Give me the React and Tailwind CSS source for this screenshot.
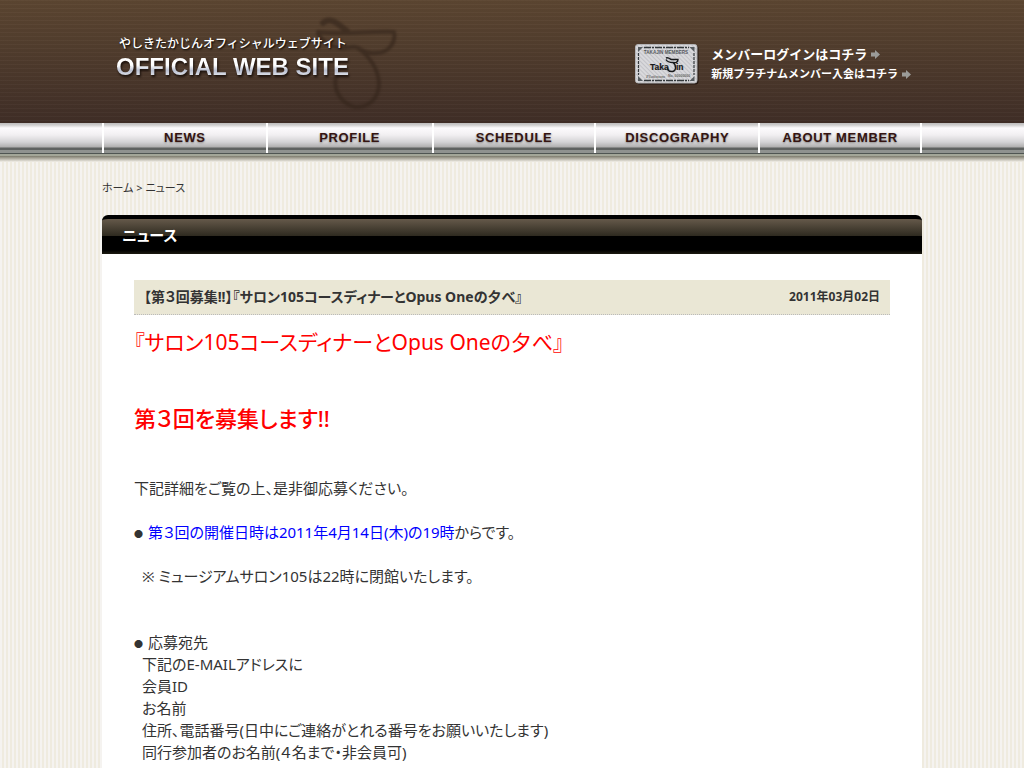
import React from 'react';

const menuItems = [
  { label: 'NEWS', href: '#news', width: 'w-[164px]' },
  { label: 'PROFILE', href: '#profile', width: 'w-[166px]' },
  { label: 'SCHEDULE', href: '#schedule', width: 'w-[163px]' },
  { label: 'DISCOGRAPHY', href: '#discography', width: 'w-[164px]' },
  { label: 'ABOUT MEMBER', href: '#member', width: 'w-[162px]' },
];

const entryLines = [
  '下記のE-MAILアドレスに',
  '会員ID',
  'お名前',
  '住所、電話番号(日中にご連絡がとれる番号をお願いいたします)',
  '同行参加者のお名前(４名まで・非会員可)',
];

const HatMark = ({ className }) => (
  <svg className={className} viewBox="0 0 90 100" fill="none" stroke="currentColor" strokeLinecap="round" strokeLinejoin="round" aria-hidden="true">
    <path d="M13 8C17 4 23 5 28 9L37 16" strokeWidth="6" />
    <path d="M8 17C30 20 60 16 84 17C86 26 80 38 66 38C58 39 53 36 48 33" strokeWidth="4" />
    <path d="M8 19C14 28 22 32 31 33C38 34 42 30 48 33C60 42 68 54 69 68C69 84 58 93 45 92C32 89 23 76 26 62" strokeWidth="4" />
  </svg>
);

const Arrow = () => (
  <svg className="w-[9px] h-[9px] shrink-0" viewBox="0 0 9 9" fill="#9b9b98" aria-hidden="true">
    <path d="M0 2.5H4V0L9 4.5L4 9V6.5H0Z" />
  </svg>
);

const MemberCard = () => (
  <svg className="w-[64px] h-[41px] shrink-0" viewBox="0 0 64 41" role="img" aria-label="Takajin Members">
    <defs>
      <pattern id="hatch" width="3" height="3" patternUnits="userSpaceOnUse" patternTransform="rotate(-45)">
        <rect width="3" height="3" fill="#d9d9dc" />
        <rect width="1" height="3" fill="#c3c3c8" />
      </pattern>
    </defs>
    <rect x="1.5" y="1.5" width="62" height="39" rx="3" fill="#241812" />
    <rect x="0.5" y="0.5" width="61.5" height="38.5" rx="2.5" fill="url(#hatch)" stroke="#b4b4b6" />
    <path d="M9 3.500H54M9 36.500H54" fill="none" stroke="#33383b" strokeWidth="1.4" strokeDasharray="7 1 2 1" />
    <path d="M3.500 9V31M59 9V31" fill="none" stroke="#33383b" strokeWidth="1.2" strokeDasharray="3 1" />
    <g fill="#565c60">
      <path d="M3 3h5l-5 5zM59.500 3h-5l5 5zM3 37h5l-5-5zM59.500 37h-5l5-5z" />
    </g>
    <text x="31" y="9.500" textAnchor="middle" fontSize="4.600" fontFamily="Liberation Sans" fontWeight="bold" fill="#55585c">TAKAJIN MEMBERS</text>
    <text x="15" y="25.500" fontSize="8.500" fontFamily="Liberation Sans" fill="#17191b" stroke="#17191b" strokeWidth=".2">Taka</text>
    <text x="41" y="25.500" fontSize="8.500" fontFamily="Liberation Sans" fill="#17191b" stroke="#17191b" strokeWidth=".2">in</text>
    <path d="M31 14c2-1 3 0 5 1.500h7c0 3-3 3.500-5 3c4 3 3 9-1 9s-5-2-4-4M31 15.500c1 2 3 3 7 3" fill="none" stroke="#17191b" strokeWidth="1.400" />
    <text x="11" y="34" fontSize="5" fontFamily="Liberation Serif" fontStyle="italic" fill="#777">Platinum</text>
    <text x="33" y="33" fontSize="3.500" fontFamily="Liberation Sans" fill="#666">No. 00000000</text>
  </svg>
);

const Header = () => (
  <header className="bg-[repeating-linear-gradient(to_bottom,#ffffff06_0px,#ffffff06_1px,#00000006_1px,#00000006_4px),linear-gradient(to_bottom,#5c4631,#402e27)] [font-feature-settings:normal]">
    <div className="relative mx-auto flex h-[123px] max-w-[820px] items-start justify-between">
      <HatMark className="absolute left-[208px] top-[15px] h-[100px] w-[90px] text-[#33241a] opacity-60 blur-[1px]" />
      <h1 className="relative pt-[34px] pl-[14px] text-white">
        <a href="#home" className="block">
          <span className="block pl-[3px] text-xs leading-[20px] font-medium [text-shadow:1px_1px_2px_#000]">やしきたかじんオフィシャルウェブサイト</span>
          <span className="block font-[Liberation_Sans] text-[24px] leading-[26px] font-bold drop-shadow-[1px_2px_1px_#1a100b]">
            <span className="bg-[linear-gradient(to_bottom,#ffffff_45%,#b9bfd0_65%,#ffffff)] bg-clip-text text-transparent">OFFICIAL WEB SITE</span>
          </span>
        </a>
      </h1>
      <div className="flex gap-3 pt-[44px] pr-[11px] font-bold text-white">
        <MemberCard />
        <div>
          <a href="#login" className="flex items-center gap-1 text-[13px] leading-[20px]">メンバーログインはコチラ<Arrow /></a>
          <a href="#join" className="flex items-center gap-1 text-[11px] leading-[20px]">新規プラチナムメンバー入会はコチラ<Arrow /></a>
        </div>
      </div>
    </div>
  </header>
);

const Menu = () => (
  <nav className="bg-[linear-gradient(to_bottom,#bdbcbc_0px,#cfcece_2px,#fdfbfd_5px,#f1eff1_12px,#d4d3d5_19px,#b0afaf_24px,#5f6260_25px,#5f6260_27px,#8f928f_27px,#8f928f_30px,#4f5552_30px,#4f5552_31px,#a3a698_31px,#a3a698_33px,#7d7b6c_33px,#f3f0e8_39px)] pb-[9px]">
    <ul className="mx-auto flex h-[30px] max-w-[820px] border-l-2 border-white">
      {menuItems.map((item) => (
        <li key={item.label} className={`${item.width} border-r-2 border-white`}>
          <a
            href={item.href}
            className="flex h-full items-center justify-center font-[Liberation_Sans] text-[13px] font-bold tracking-wider text-[#351411] [text-shadow:0_1px_2px_#888]"
          >
            {item.label}
          </a>
        </li>
      ))}
    </ul>
  </nav>
);

const Bullet = () => <span className="mr-[5px] inline-block align-middle text-[9px] leading-none">●</span>;

const App = () => {
  return (
    <div className="flex min-h-screen flex-col bg-[repeating-linear-gradient(to_right,#f5f3f0_0px,#f5f3f0_2px,#efebdf_2px,#efebdf_4px)] font-['Noto_Sans','Noto_Sans_CJK_JP',sans-serif] text-[#333] [font-feature-settings:'palt']">
      <Header />
      <Menu />
      <main className="mx-auto flex w-full max-w-[820px] flex-1 flex-col">
        <p className="pt-4 pb-[17px] text-[11px] leading-[20px]">
          <a href="#home">ホーム</a> &gt; <a href="#news">ニュース</a>
        </p>
        <h2 className="h-[39px] rounded-t-md border-t-4 border-black bg-[linear-gradient(to_bottom,#65594a_0px,#2e2a20_17px,#000_17px,#000_31px,#1c1a10_35px)] pl-5 text-[15px] leading-[32px] font-bold text-white">
          ニュース
        </h2>
        <article className="flex-1 bg-white px-8 pt-[26px] pb-1">
          <div className="flex h-[35px] items-center justify-between border-b border-dotted border-[#bbb] bg-[#eae7d5] px-[10px] font-bold">
            <h3 className="text-sm">【第３回募集!!】『サロン105コースディナーとOpus Oneの夕べ』</h3>
            <time dateTime="2011-03-02" className="text-xs">2011年03月02日</time>
          </div>
          <div className="text-[15px] leading-[22px]">
            <p className="pt-[10px] text-[21px] leading-[34px] text-[#f00]">『サロン105コースディナーとOpus Oneの夕べ』</p>
            <p className="pt-[42px] text-[22px] leading-[34px] font-medium text-[#f00]">第３回を募集します!!</p>
            <p className="pt-[42px]">下記詳細をご覧の上、是非御応募ください。</p>
            <p className="pt-[22px]"><Bullet /><span className="text-[#00f]">第３回の開催日時は2011年4月14日(木)の19時</span>からです。</p>
            <p className="pt-[22px] pl-2">※ ミュージアムサロン105は22時に閉館いたします。</p>
            <p className="pt-[44px]"><Bullet />応募宛先</p>
            {entryLines.map((line) => (
              <p key={line} className="pl-2">{line}</p>
            ))}
          </div>
        </article>
      </main>
    </div>
  );
};

export default App;
